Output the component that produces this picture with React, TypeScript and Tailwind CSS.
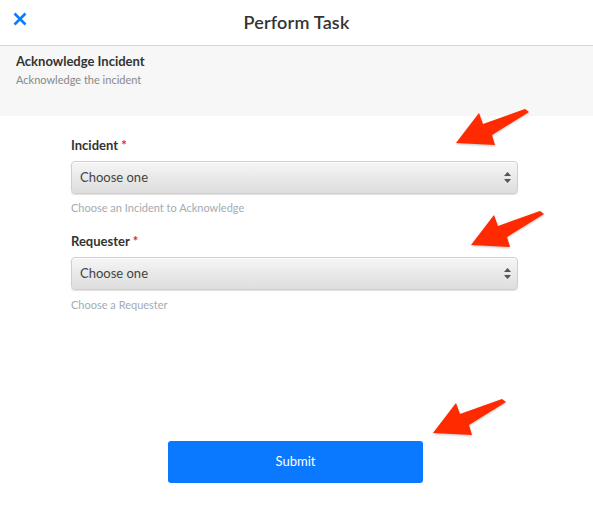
import React from "react";

function Arrow({ className }: { className: string }) {
  return (
    <svg
      className={className}
      width="76"
      height="40"
      viewBox="0 0 76 40"
      style={{ filter: "drop-shadow(0px 1px 1px rgba(0,0,0,0.25))" }}
    >
      <polygon
        points="1,35 24,5 28,16 70,1 74,4 37,27 40,37"
        fill="#ff2a00"
      />
    </svg>
  );
}

function SelectBox() {
  return (
    <div className="relative h-[33px] w-full rounded-[4px] border border-[#cfcfcf] bg-gradient-to-b from-[#f6f6f6] via-[#e9e9e9] to-[#dedede] shadow-[0_1px_1px_rgba(0,0,0,0.12),inset_0_1px_0_rgba(255,255,255,0.8)] flex items-center">
      <span className="pl-[8px] text-[13px] text-[#444]">Choose one</span>
      <svg className="absolute right-[6px] top-[10px]" width="7" height="11" viewBox="0 0 7 11">
        <polygon points="3.5,0 7,4 0,4" fill="#555" />
        <polygon points="0,7 7,7 3.5,11" fill="#555" />
      </svg>
    </div>
  );
}

export default function App() {
  return (
    <div
      className="relative w-[593px] h-[526px] bg-white overflow-hidden"
      style={{ fontFamily: "Lato, 'Noto Sans', sans-serif" }}
    >
      <header className="relative h-[46px] border-b border-[#d6d6d6] flex items-center justify-center">
        <svg className="absolute left-[13px] top-[12px]" width="14" height="14" viewBox="0 0 14 14">
          <path d="M1.5 1.5 L12.5 12.5 M12.5 1.5 L1.5 12.5" stroke="#0a7cff" strokeWidth="2.6" strokeLinecap="butt" />
        </svg>
        <h1 className="text-[18px] font-semibold text-[#333] tracking-[0.2px]">Perform Task</h1>
      </header>

      <section className="h-[70px] bg-[#f7f7f7] px-[16px] pt-[6px]">
        <div className="text-[13px] font-bold text-[#333] leading-[18px]">Acknowledge Incident</div>
        <div className="text-[11px] text-[#888] leading-[16px] mt-[2px]">Acknowledge the incident</div>
      </section>

      <div className="pl-[71px] pr-[75px] pt-[20px]">
        <div className="flex flex-col">
          <label className="text-[13px] font-bold text-[#333] leading-[18px]">
            Incident <span className="text-[#e0262e]">*</span>
          </label>
          <div className="mt-[7px]">
            <SelectBox />
          </div>
          <div className="mt-[6px] text-[11px] text-[#a3acb3] leading-[16px]">
            Choose an Incident to Acknowledge
          </div>
        </div>

        <div className="flex flex-col mt-[16px]">
          <label className="text-[13px] font-bold text-[#333] leading-[18px]">
            Requester <span className="text-[#e0262e]">*</span>
          </label>
          <div className="mt-[7px]">
            <SelectBox />
          </div>
          <div className="mt-[7px] text-[11px] text-[#a3acb3] leading-[16px]">
            Choose a Requester
          </div>
        </div>
      </div>

      <div className="flex justify-center pt-[128px] pr-[2px]">
        <button className="w-[255px] h-[42px] rounded-[3px] bg-[#0a78ff] text-white text-[13px]">
          Submit
        </button>
      </div>

      <Arrow className="absolute left-[455px] top-[108px]" />
      <Arrow className="absolute left-[470px] top-[210px]" />
      <Arrow className="absolute left-[432px] top-[398px]" />
    </div>
  );
}
